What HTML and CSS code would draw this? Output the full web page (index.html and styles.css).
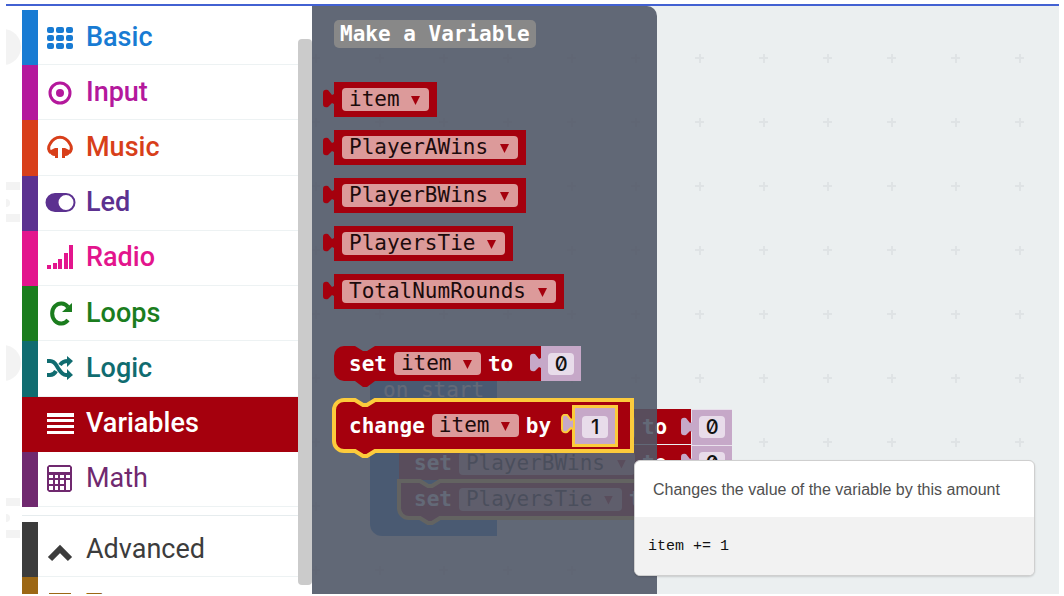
FILE: index.html
```html
<!DOCTYPE html>
<html lang="en">
<head>
<meta charset="utf-8">
<title>Block editor</title>
<link rel="stylesheet" href="styles.css">
</head>
<body>
<svg class="defs" aria-hidden="true">
  <symbol id="tab" viewBox="0 0 12 20"><path d="M12 5L10 6L6 1Q1 0 1 4V15Q1 19 6 18L10 14L12 15"/></symbol>
</svg>
<main class="app">
  <svg class="simulator" viewBox="0 0 16 588" aria-hidden="true"><g fill="#f3f3f3"><circle cx="-3" cy="41" r="18"/><circle cx="-3" cy="357" r="18"/><path d="M0 176h14v8H0zM0 208h14v8H0zM0 492h14v8H0zM0 524h14v8H0z"/><circle cy="197" r="4"/><circle cy="512" r="4"/></g></svg>

  <nav class="toolbox" aria-label="Block categories">
    <div class="groups">
      <div class="group main">
        <button class="cat basic"><svg viewBox="0 0 28 28"><g id="dots"><rect x="1" y="4" width="7" height="6" rx="2"/><rect x="10" y="4" width="8" height="6" rx="2"/><rect x="20" y="4" width="7" height="6" rx="2"/></g><use href="#dots" y="8"/><use href="#dots" y="16"/></svg>Basic</button>
        <button class="cat input"><svg viewBox="0 0 28 28"><circle cx="14" cy="15" r="10" fill="none" stroke="currentColor" stroke-width="3"/><circle cx="14" cy="15" r="4"/></svg>Input</button>
        <button class="cat music"><svg viewBox="0 0 28 28"><path d="M5 20C2 17 2 14 4 11C9 2 19 2 24 11C26 14 26 17 23 20" fill="none" stroke="currentColor" stroke-width="3"/><path d="M5 17l4-2h3v10H9V23C6 23 4 21 3 18zM23 17l-4-2h-3v10h3v-2c3 0 5-2 6-5z"/></svg>Music</button>
        <button class="cat led"><svg viewBox="0 0 28 28"><path fill-rule="evenodd" d="M9 5h11a9 9 0 0 1 0 19H9A9 9 0 0 1 9 5zM20 7a7 7 0 0 0 0 15a7 7 0 0 0 0-15z"/></svg>Led</button>
        <button class="cat radio"><svg viewBox="0 0 28 28"><path d="M1 22h4v4H1zm6-2h4v6H7zm5-4h4v10h-4zm6-6h4v16h-4zm5-8h4v24h-4z"/></svg>Radio</button>
        <button class="cat loops"><svg viewBox="0 0 28 28"><path d="M22 8A9 10 0 1 0 22 21" fill="none" stroke="currentColor" stroke-width="4"/><path d="M26 4v9H16z"/></svg>Loops</button>
        <button class="cat logic"><svg viewBox="0 0 28 28"><path d="M1 7h3c5 0 6 4 8 7s4 7 8 7h2M1 21h3c3 0 5-2 6-4M14 11c2-3 4-4 8-4" fill="none" stroke="currentColor" stroke-width="4"/><path d="M21 2l6 5-6 6zM21 15l6 6-6 5z"/></svg>Logic</button>
        <button class="cat variables active"><svg viewBox="0 0 28 28"><path d="M1 4h27v4H1zm0 6h27v3H1zm0 6h27v3H1zm0 6h27v3H1z"/></svg>Variables</button>
        <button class="cat math"><svg viewBox="0 0 28 28"><path fill-rule="evenodd" d="M3 1h21l2 2v23l-2 2H3l-2-2V3zm0 2v5h21V3zm0 8v3h4v-3zm6 0v3h3v-3zm5 0v3h4v-3zm6 0v3h4v-3zM3 16v4h4v-4zm6 0v4h3v-4zm5 0v4h4v-4zm6 0v10h4V16zM3 22v4h4v-4zm6 0v4h3v-4zm5 0v4h4v-4z"/></svg>Math</button>
      </div>
      <div class="group more">
        <button class="cat advanced"><svg viewBox="0 0 28 28"><path d="M4 24l10-10 10 10" fill="none" stroke="currentColor" stroke-width="6"/></svg>Advanced</button>
        <button class="cat text"><svg viewBox="0 0 28 28"><path d="M3 3h22v3H3z"/></svg>Text</button>
      </div>
    </div>
    <div class="scrollbar"><div class="thumb"></div></div>
  </nav>

  <section class="workspace" aria-label="Workspace">
    <svg class="grid" aria-hidden="true"><defs><pattern id="plus" x="355" y="20" width="64" height="64" patternUnits="userSpaceOnUse"><path d="M28 32h9M33 28v9" stroke="#dfe3e5" stroke-width="2"/></pattern></defs><rect width="100%" height="100%" fill="url(#plus)"/></svg>

    <div class="hat">
      <div class="hat-label">on start</div>
      <div class="block row">
        <svg class="shape"><path d="M0 0H293V35H0z"/></svg>
        <span>set</span><span class="field"><select aria-label="Variable"><option>PlayerAWins</option></select></span><span>to</span>
        <span class="value"><svg class="tab"><use href="#tab"/></svg><input aria-label="Value" value="0"></span>
      </div>
      <div class="block row">
        <svg class="shape"><path d="M0 0H293V35H0z"/></svg>
        <span>set</span><span class="field"><select aria-label="Variable"><option>PlayerBWins</option></select></span><span>to</span>
        <span class="value"><svg class="tab"><use href="#tab"/></svg><input aria-label="Value" value="0"></span>
      </div>
      <div class="block row selected">
        <svg class="shape"><path d="M10 0H21l8 5h4l8-5H281V37H41l-8 5h-4l-8-5H10A10 10 0 0 1 0 27V0z"/></svg>
        <span>set</span><span class="field"><select aria-label="Variable"><option>PlayersTie</option></select></span><span>to</span>
        <span class="value"><svg class="tab"><use href="#tab"/></svg><input aria-label="Value" value="0"></span>
      </div>
    </div>

    <div class="flyout">
      <button class="make">Make a Variable</button>
      <div class="reporters">
        <div class="reporter"><svg class="tab"><use href="#tab"/></svg><span class="field"><select aria-label="Variable"><option>item</option></select></span></div>
        <div class="reporter"><svg class="tab"><use href="#tab"/></svg><span class="field"><select aria-label="Variable"><option>PlayerAWins</option></select></span></div>
        <div class="reporter"><svg class="tab"><use href="#tab"/></svg><span class="field"><select aria-label="Variable"><option>PlayerBWins</option></select></span></div>
        <div class="reporter"><svg class="tab"><use href="#tab"/></svg><span class="field"><select aria-label="Variable"><option>PlayersTie</option></select></span></div>
        <div class="reporter"><svg class="tab"><use href="#tab"/></svg><span class="field"><select aria-label="Variable"><option>TotalNumRounds</option></select></span></div>
      </div>
      <div class="block">
        <svg class="shape"><path d="M10 0H21l8 5h4l8-5H208V35H41l-8 6h-4l-8-6H10A10 10 0 0 1 0 25V10A10 10 0 0 1 10 0z"/></svg>
        <span>set</span><span class="field"><select aria-label="Variable"><option>item</option></select></span><span>to</span>
        <span class="value"><svg class="tab"><use href="#tab"/></svg><input aria-label="Value" value="0"></span>
      </div>
      <div class="block change selected">
        <svg class="shape"><path d="M10 0H21l8 5h4l8-5H298V51H41l-8 5h-4l-8-5H10A10 10 0 0 1 0 41V10A10 10 0 0 1 10 0z"/></svg>
        <span>change</span><span class="field"><select aria-label="Variable"><option>item</option></select></span><span>by</span>
        <span class="value"><svg class="tab"><use href="#tab"/></svg><input aria-label="Value" value="1"></span>
      </div>
    </div>

    <div class="tooltip" role="tooltip">
      <p>Changes the value of the variable by this amount</p>
      <code>item += 1</code>
    </div>
  </section>
</main>
</body>
</html>
```
FILE: styles.css
```css
* { box-sizing: border-box; }
body {
  margin: 0;
  padding: 4px 5px 2px 6px;
  height: 100vh;
  background: #fff;
  overflow: hidden;
}
button, input, select { font: inherit; color: inherit; border: 0; margin: 0; padding: 0; background: none; }
.defs { position: absolute; width: 0; height: 0; }
.app {
  display: flex;
  height: 100%;
  border-top: 2px solid #4261d2;
  overflow: hidden;
}
.simulator { flex: none; width: 16px; height: 588px; }

.toolbox { display: flex; flex: none; width: 290px; }
.groups { display: flex; flex-direction: column; flex: 1; padding-top: 4px; }
.group { display: flex; flex-direction: column; }
.main { flex: 1; }
.more { height: 79px; margin-top: 8px; padding-top: 6px; border-top: 1px solid #e6ecee; overflow: hidden; }
.cat {
  display: flex;
  align-items: center;
  gap: 12px;
  flex: 1;
  padding: 0 0 2px 8px;
  border-left: 16px solid var(--c);
  color: var(--c);
  background: linear-gradient(#edf2f3, #edf2f3) bottom / 100% 1px no-repeat;
  font: 500 27px/32px Roboto, sans-serif;
  text-align: left;
}
.more .cat { flex: none; height: 55px; }
.cat svg { flex: none; width: 28px; height: 28px; fill: currentColor; overflow: visible; }
.basic { --c: #187bd3; }
.input { --c: #b4189c; }
.music { --c: #d83f1a; }
.led { --c: #5c3190; }
.radio { --c: #e3158d; }
.loops { --c: #1b7d1e; }
.logic { --c: #106c70; }
.variables { --c: #a5000d; }
.math { --c: #70296f; font-weight: 400; }
.advanced { --c: #3c3c3c; font-weight: 400; }
.text { --c: #9c6714; }
.cat.active { background: var(--c); color: #fff; }
.scrollbar { flex: none; width: 14px; padding: 33px 0 9px; }
.thumb { height: 100%; border-radius: 4px; background: #cbcbcb; }

.workspace {
  position: relative;
  flex: 1;
  background: #ebeff0;
  font: 400 21px/24px "DejaVu Sans Mono", monospace;
  white-space: nowrap;
}
.grid { position: absolute; inset: 0; width: 100%; height: 100%; }

.hat {
  position: absolute;
  left: 58px;
  top: 366px;
  width: 127px;
  padding: 0 0 19px 29px;
  border-radius: 12px 0 0 12px;
  background: #1b7bd3;
  color: #fff;
}
.hat-label { height: 37px; margin-left: -16px; padding-top: 6px; }

.flyout {
  position: absolute;
  inset: 0 auto 0 0;
  width: 345px;
  display: flex;
  flex-direction: column;
  align-items: flex-start;
  padding: 14px 0 0 22px;
  border-top-right-radius: 10px;
  background: rgba(80, 87, 102, .89);
}
.make {
  height: 28px;
  padding: 0 6px;
  border-radius: 5px;
  background: #888;
  color: #fff;
  font-weight: 700;
}
.reporters { display: flex; flex-direction: column; align-items: flex-start; gap: 13px; margin: 34px 0 37px; }
.reporter { position: relative; padding: 6px 8px; height: 35px; background: #a5000d; fill: #a5000d; }
.tab { position: absolute; left: -12px; top: 7px; width: 12px; height: 20px; overflow: visible; }

.field { position: relative; display: block; height: 23px; border-radius: 4px; background: #dc9a9a; color: #1c0b0c; font-weight: 400; }
.field::after {
  content: "";
  position: absolute;
  right: 9px;
  top: 8px;
  width: 9px;
  height: 9px;
  background: #a5000d;
  clip-path: polygon(0 0, 100% 0, 50% 100%);
}
.field select { display: block; height: 23px; padding: 0 29px 0 7px; appearance: none; line-height: 23px; }

.block {
  position: relative;
  display: flex;
  align-items: center;
  gap: 7px;
  height: 35px;
  padding-left: 15px;
  color: #fff;
  font-weight: 700;
}
.block > span { position: relative; }
.shape { position: absolute; inset: 0; width: 100%; height: 100%; overflow: visible; fill: #a5000d; }
.value { height: 35px; padding: 7px; margin-left: 21px; background: #c6a8c8; fill: #c6a8c8; }
.value input {
  display: block;
  width: 26px;
  height: 22px;
  border-radius: 4px;
  background: #e8dcea;
  color: #111;
  font: 500 20px/22px Inter, sans-serif;
  font-feature-settings: "zero";
  text-align: center;
}
.selected .shape { stroke: #fccb3c; stroke-width: 4px; }
.change { height: 51px; margin-top: 19px; }
.change .value { height: 42px; padding: 8px 7px; margin-left: 14px; border: 3px solid #fccb3c; }
.change .tab { left: -14px; top: 6px; stroke: #fccb3c; stroke-width: 2px; }
.row { width: max-content; height: 36px; }
.row .value { height: 36px; padding: 6px 7px; margin-left: 17px; border-top: 1px solid #e9e0ec; border-left: 1px solid #e9e0ec; }

.tooltip {
  position: absolute;
  left: 322px;
  top: 454px;
  border: 1px solid #cfcfcf;
  border-radius: 6px;
  overflow: hidden;
  background: #fff;
  box-shadow: 0 1px 2px rgba(0, 0, 0, .15);
}
.tooltip p { margin: 0; padding: 19px 34px 17px 18px; color: #505050; font: 16px/20px "Liberation Sans", Arial, sans-serif; }
.tooltip code { display: block; padding: 20px 13px 18px; background: #f2f2f2; color: #111; font: 15px/20px "Liberation Mono", monospace; }
```
